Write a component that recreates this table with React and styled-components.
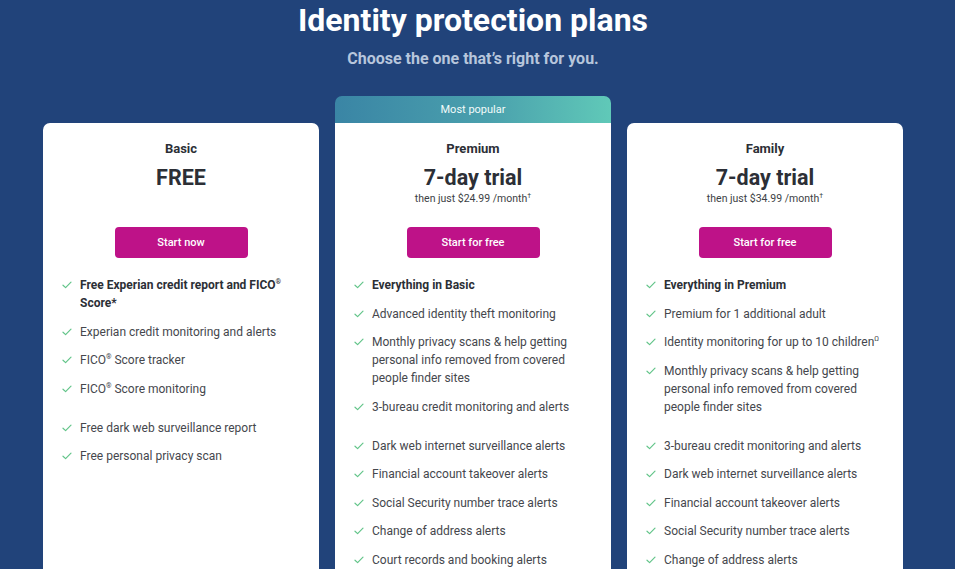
import React from 'react'
import styled, { createGlobalStyle } from 'styled-components'

const GlobalStyle = createGlobalStyle`
    html, body {
        margin: 0;
        padding: 0;
        background: #21437a;
        font-family: Roboto, "Noto Sans", Arial, sans-serif;
        overflow: hidden;
    }
`

const plans = [
    {
        name: 'Basic',
        price: 'FREE',
        cta: 'Start now',
        groups: [
            [
                { text: <>Free Experian credit report and FICO<sup>®</sup> Score*</>, bold: true },
                { text: 'Experian credit monitoring and alerts' },
                { text: <>FICO<sup>®</sup> Score tracker</> },
                { text: <>FICO<sup>®</sup> Score monitoring</> },
            ],
            [
                { text: 'Free dark web surveillance report' },
                { text: 'Free personal privacy scan' },
            ],
        ],
    },
    {
        name: 'Premium',
        price: '7-day trial',
        note: '$24.99',
        cta: 'Start for free',
        popular: true,
        groups: [
            [
                { text: 'Everything in Basic', bold: true },
                { text: 'Advanced identity theft monitoring' },
                { text: 'Monthly privacy scans & help getting personal info removed from covered people finder sites' },
                { text: '3-bureau credit monitoring and alerts' },
            ],
            [
                { text: 'Dark web internet surveillance alerts' },
                { text: 'Financial account takeover alerts' },
                { text: 'Social Security number trace alerts' },
                { text: 'Change of address alerts' },
                { text: 'Court records and booking alerts' },
            ],
        ],
    },
    {
        name: 'Family',
        price: '7-day trial',
        note: '$34.99',
        cta: 'Start for free',
        groups: [
            [
                { text: 'Everything in Premium', bold: true },
                { text: 'Premium for 1 additional adult' },
                { text: <>Identity monitoring for up to 10 children<sup>Ω</sup></> },
                { text: 'Monthly privacy scans & help getting personal info removed from covered people finder sites' },
            ],
            [
                { text: '3-bureau credit monitoring and alerts' },
                { text: 'Dark web internet surveillance alerts' },
                { text: 'Financial account takeover alerts' },
                { text: 'Social Security number trace alerts' },
                { text: 'Change of address alerts' },
            ],
        ],
    },
]

const Check = () => (
    <CheckIcon viewBox="0 0 10 8" width="10" height="8">
        <polyline points="1,4.2 3.6,6.6 9,1.2" fill="none" stroke="#62c489" strokeWidth="1.2" strokeLinecap="round" strokeLinejoin="round" />
    </CheckIcon>
)

const App = () => {
    return (
        <Page>
            <GlobalStyle />
            <Title>Identity protection plans</Title>
            <Subtitle>Choose the one that’s right for you.</Subtitle>
            <Cards>
                {plans.map((plan) => (
                    <Column key={plan.name}>
                        {plan.popular ? <Banner>Most popular</Banner> : <BannerSpace />}
                        <Card $popular={plan.popular}>
                            <PlanName>{plan.name}</PlanName>
                            <Price>{plan.price}</Price>
                            <Note>
                                {plan.note ? <>then just {plan.note} /month<sup>†</sup></> : ''}
                            </Note>
                            <Button>{plan.cta}</Button>
                            {plan.groups.map((group, gi) => (
                                <Features key={gi}>
                                    {group.map((item, i) => (
                                        <Feature key={i} $bold={item.bold}>
                                            <Check />
                                            <span>{item.text}</span>
                                        </Feature>
                                    ))}
                                </Features>
                            ))}
                        </Card>
                    </Column>
                ))}
            </Cards>
        </Page>
    )
}

export default App

const Page = styled.main`
    width: 955px;
    height: 569px;
    box-sizing: border-box;
    padding: 0 52px 0 43px;
    display: flex;
    flex-direction: column;
    align-items: center;
    color: #fff;
    overflow: hidden;
`

const Title = styled.h1`
    margin: 0;
    font-size: 32px;
    line-height: 40px;
    font-weight: 700;
    color: #fff;
`

const Subtitle = styled.p`
    margin: 10px 0 0;
    font-size: 16px;
    line-height: 18px;
    font-weight: 700;
    color: #b7c6dc;
`

const Cards = styled.div`
    width: 100%;
    margin-top: 28px;
    display: grid;
    grid-template-columns: repeat(3, 1fr);
    column-gap: 16px;
`

const Column = styled.div`
    display: flex;
    flex-direction: column;
`

const Banner = styled.div`
    height: 27px;
    border-radius: 7px 7px 0 0;
    background: linear-gradient(90deg, #3a85a5 0%, #4aa0ad 55%, #60c9b8 100%);
    color: #f2fbfa;
    font-size: 11px;
    line-height: 27px;
    text-align: center;
`

const BannerSpace = styled.div`
    height: 27px;
`

const Card = styled.div`
    background: #fff;
    border-radius: ${(p) => (p.$popular ? '0 0 7px 7px' : '7px')};
    padding: 17px 18px 40px 18px;
    display: flex;
    flex-direction: column;
    align-items: center;
    color: #3d3f45;
    height: 600px;
`

const PlanName = styled.div`
    font-size: 13px;
    line-height: 18px;
    font-weight: 700;
    color: #2c2f36;
`

const Price = styled.div`
    margin-top: 6px;
    font-size: 21.5px;
    line-height: 28px;
    font-weight: 700;
    color: #2c2f36;
`

const Note = styled.div`
    height: 14px;
    margin-top: 0;
    font-size: 10.5px;
    line-height: 14px;
    color: #3d3f45;

    sup {
        font-size: 7px;
        vertical-align: 4px;
        line-height: 0;
    }
`

const Button = styled.button`
    margin-top: 21px;
    width: 133px;
    height: 31px;
    border: none;
    border-radius: 4px;
    background: #be1288;
    color: #fff;
    font-family: inherit;
    font-size: 11px;
    font-weight: 500;
    cursor: pointer;
`

const Features = styled.ul`
    list-style: none;
    align-self: stretch;
    margin: 18px 0 0;
    padding: 0 0 0 1px;
    display: flex;
    flex-direction: column;
    gap: 10.5px;

    & + & {
        margin-top: 21px;
    }
`

const Feature = styled.li`
    display: flex;
    align-items: flex-start;
    gap: 8px;
    font-size: 12px;
    line-height: 18px;
    font-weight: ${(p) => (p.$bold ? 700 : 400)};
    color: ${(p) => (p.$bold ? '#2c2f36' : '#45474d')};

    sup {
        font-size: 7px;
        vertical-align: 5px;
        line-height: 0;
    }
`

const CheckIcon = styled.svg`
    flex: none;
    margin-top: 5px;
`
